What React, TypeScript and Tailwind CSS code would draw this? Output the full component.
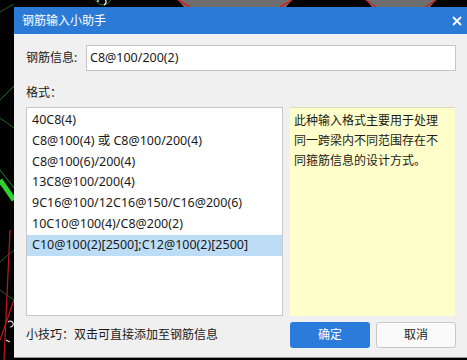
import React from 'react';

const formats = [
  '40C8(4)',
  'C8@100(4) 或 C8@100/200(4)',
  'C8@100(6)/200(4)',
  '13C8@100/200(4)',
  '9C16@100/12C16@150/C16@200(6)',
  '10C10@100(4)/C8@200(2)',
  'C10@100(2)[2500];C12@100(2)[2500]',
];

const font = { fontFamily: '"Noto Sans", "Noto Sans CJK SC", sans-serif' };

const CadBackground: React.FC = () => (
  <svg className="absolute inset-0" width="467" height="360" viewBox="0 0 467 360">
    <rect width="467" height="360" fill="#000" />
    {/* top strip */}
    <path d="M178 0 L292 0 L286 7 L184 7 Z" fill="#6e6e6e" />
    <path d="M178 0 L190 7 M292 0 L280 7" stroke="#d02020" strokeWidth="1.5" />
    <path d="M366 0 L436 0 L430 7 L372 7 Z" fill="#6e6e6e" />
    <path d="M366 0 L376 7 M436 0 L426 7" stroke="#d02020" strokeWidth="1.5" />
    <circle cx="103" cy="-3" r="8" fill="none" stroke="#2a7a2a" strokeWidth="1" />
    <path d="M98 2 a4 4 0 1 1 6 3" fill="none" stroke="#fff" strokeWidth="1.2" />
    {/* left strip */}
    <path d="M0 12 L14 4" stroke="#1f5f1f" strokeWidth="1" />
    <path d="M0 100 L14 86 M0 118 L14 128" stroke="#1f6f1f" strokeWidth="1" />
    <path d="M0 180 L14 200" stroke="#30d030" strokeWidth="5" />
    <path d="M0 170 L14 188" stroke="#1f8f1f" strokeWidth="1" />
    <path d="M0 262 L14 250 M0 290 L14 300" stroke="#1f5f1f" strokeWidth="1" />
    <path d="M10 230 L4 360 M14 300 L0 340" stroke="#c01818" strokeWidth="1.2" />
    <path d="M8 322 a3 3 0 1 1 2 5 M6 340 l4 2" fill="none" stroke="#ddd" strokeWidth="1.2" />
  </svg>
);

export default function App() {
  return (
    <div className="relative w-[467px] h-[360px] overflow-hidden bg-black" style={font}>
      <CadBackground />
      <div className="absolute left-[14px] top-[7px] w-[460px] h-[351px] flex flex-col bg-[#f0f0f0] border-b border-[#9a9a9a]">
        <div className="h-[27px] shrink-0 flex items-center bg-[#2b7bd6] pl-[8px] text-white text-[12px]">
          <span>钢筋输入小助手</span>
          <svg className="ml-auto mr-[12px]" width="10" height="10" viewBox="0 0 10 10">
            <path d="M1 1 L9 9 M9 1 L1 9" stroke="#fff" strokeWidth="1.8" />
          </svg>
        </div>
        <div className="flex flex-col pl-[12px] pr-[11px] w-[453px]">
          <div className="flex items-center mt-[11px] h-[26px]">
            <span className="w-[60px] text-[12px] text-[#1a1a1a]">钢筋信息:</span>
            <div className="flex-1 h-[26px] bg-white border border-[#c6c6c6] flex items-center pl-[3px] text-[12.5px] text-[#1a1a1a]">
              C8@100/200(2)
            </div>
          </div>
          <div className="mt-[14px] h-[16px] flex items-center text-[12px] text-[#1a1a1a]">格式：</div>
          <div className="mt-[6px] flex gap-[7px] h-[209px]">
            <div className="w-[257px] bg-white border border-[#c8c8c8] pt-[2px] overflow-hidden">
              {formats.map((f, i) => (
                <div
                  key={f}
                  className={`h-[20.8px] flex items-center pl-[5px] whitespace-nowrap text-[12.5px] text-[#1a1a1a] ${
                    i === formats.length - 1 ? 'bg-[#bddcf5]' : ''
                  }`}
                >
                  {f}
                </div>
              ))}
            </div>
            <div className="w-[165px] bg-[#ffffcc] border-t border-[#dcdcc0] pl-[4px] pr-[12px] pt-[3px] text-[12px] leading-[20px] text-[#1a1a1a]">
              此种输入格式主要用于处理同一跨梁内不同范围存在不同箍筋信息的设计方式。
            </div>
          </div>
          <div className="mt-[6px] h-[26px] flex items-center">
            <span className="flex-1 text-[12px] text-[#1a1a1a]">小技巧：双击可直接添加至钢筋信息</span>
            <button className="w-[80px] h-[26px] rounded-[3px] bg-[#2b7bdc] text-white text-[12px]">确定</button>
            <button className="ml-[6px] w-[80px] h-[26px] rounded-[3px] bg-[#fafafa] border border-[#c8c8c8] text-[#1a1a1a] text-[12px]">
              取消
            </button>
          </div>
        </div>
      </div>
    </div>
  );
}
